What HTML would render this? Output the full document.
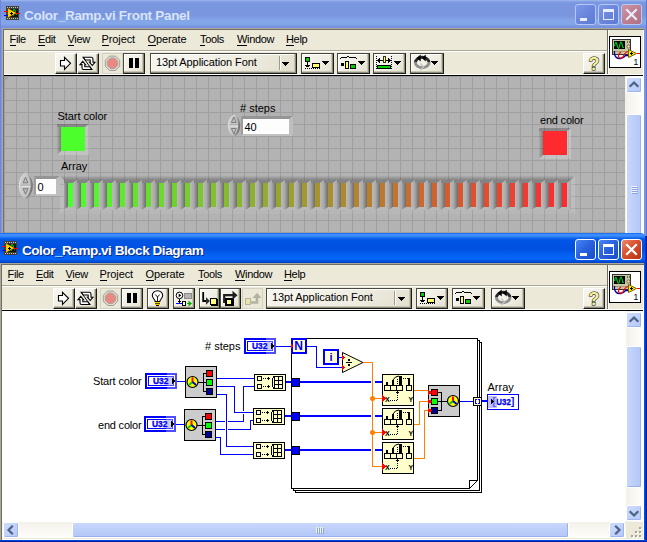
<!DOCTYPE html>
<html><head><meta charset="utf-8"><title>Color_Ramp.vi</title>
<style>
html,body{margin:0;padding:0;}
body{width:647px;height:542px;overflow:hidden;position:relative;background:#fff;font-family:"Liberation Sans","DejaVu Sans",sans-serif;font-size:11px;color:#000;line-height:1;}
.a{position:absolute;}
svg{position:absolute;left:0;top:0;overflow:visible;}
.ttext{position:absolute;font-weight:bold;font-size:13px;white-space:nowrap;line-height:16px;}
.mi{position:absolute;font-size:11px;line-height:13px;white-space:nowrap;letter-spacing:-0.35px;}
.mi u{text-decoration:none;border-bottom:1px solid #000;}
.lbl{position:absolute;font-size:11px;line-height:13px;white-space:nowrap;}
.btn{position:absolute;box-sizing:border-box;width:22px;height:21px;background:linear-gradient(135deg,#f8f7f0 0,#f0eee3 55%,#e2dfce 100%);border:1px solid;border-color:#fff #1c1c1c #1c1c1c #fff;box-shadow:inset -1px -1px 0 #8a8878,inset -2px -2px 0 #c8c5b2;}
.b2{border-color:#4a493f #1c1c1c #1c1c1c #4a493f;box-shadow:inset -1px -1px 0 #8a8878,inset -2px -2px 0 #c8c5b2,inset 1px 1px 0 #fff;}
.flat{position:absolute;box-sizing:border-box;width:21px;height:21px;background:#ebe8d8;border:1px solid #d4d1c0;}
.cap{position:absolute;box-sizing:border-box;width:21px;height:21px;border-radius:3px;border:1px solid #fff;}
.sbtn{position:absolute;box-sizing:border-box;width:16px;height:16px;border-radius:2px;border:1px solid #fff;background:linear-gradient(135deg,#cddcfc,#b5c9f8);box-shadow:inset -1px -1px 0 #9db4ee;}
</style></head><body>

<div class="a" style="left:0px;top:-2px;width:647px;height:238px;background:#7a96df;"></div>
<div class="a" style="left:0px;top:-2px;width:647px;height:30px;background:linear-gradient(#a2b8ec 0,#a2b8ec 2px,#7b9ae3 4px,#7a96df 6px,#7a96df 18px,#82a6e8 22px,#82a6e8 26px,#7790e0 29px,#7790e0 30px);"></div>
<div class="a" style="left:2px;top:28px;width:642px;height:206px;background:#aca899;"></div>
<div class="a" style="left:3px;top:29px;width:641px;height:205px;background:#716f64;"></div>
<div class="a" style="left:4px;top:30px;width:640px;height:204px;background:#fff;"></div>
<div class="a" style="left:4px;top:30px;width:639px;height:203px;background:#ece9d8;"></div>
<div class="ttext" style="left:24px;top:7.5px;font-size:13.5px;color:#d8e4f8;letter-spacing:-0.3px;">Color_Ramp.vi Front Panel</div>
<span class="mi" style="left:9.5px;top:33px;"><u>F</u>ile</span>
<span class="mi" style="left:38px;top:33px;"><u>E</u>dit</span>
<span class="mi" style="left:67.5px;top:33px;"><u>V</u>iew</span>
<span class="mi" style="left:101.5px;top:33px;letter-spacing:-0.1px;"><u>P</u>roject</span>
<span class="mi" style="left:147.5px;top:33px;letter-spacing:-0.1px;"><u>O</u>perate</span>
<span class="mi" style="left:200px;top:33px;"><u>T</u>ools</span>
<span class="mi" style="left:237px;top:33px;"><u>W</u>indow</span>
<span class="mi" style="left:286px;top:33px;"><u>H</u>elp</span>
<div class="a" style="left:4px;top:50px;width:603px;height:1px;background:#aca899;"></div>
<div class="a" style="left:4px;top:51px;width:603px;height:1px;background:#fff;"></div>
<div class="a" style="left:607px;top:30px;width:1px;height:45px;background:#716f64;"></div>
<div class="a" style="left:608px;top:30px;width:1px;height:45px;background:#fff;"></div>
<div class="a" style="left:4px;top:74px;width:639px;height:1px;background:#fff;"></div>
<div class="a" style="left:4px;top:75px;width:639px;height:1px;background:#000;"></div>
<div class="a" style="left:609px;top:36px;width:32px;height:32px;background:#fff;box-sizing:border-box;border:1px solid #000;"></div>
<div class="a" style="left:646px;top:0px;width:1px;height:236px;background:#6373d0;"></div>
<div class="a" style="left:0px;top:0px;width:1px;height:236px;background:#6f86dc;"></div>
<div class="a" style="left:4px;top:76px;width:621px;height:160px;background:#b3b3b3;background-image:linear-gradient(90deg,transparent 0,transparent 11px,#9f9f9f 11px,#9f9f9f 12px),linear-gradient(180deg,transparent 0,transparent 11px,#9f9f9f 11px,#9f9f9f 12px);background-size:12px 12px,12px 12px;background-position:1px 1px;"></div>
<div class="a" style="left:625px;top:76px;width:18px;height:160px;background:linear-gradient(90deg,#f3f1ea,#fefefb);"></div>
<div class="a" style="left:0px;top:233px;width:647px;height:309px;background:#0054e3;border-radius:0 8px 0 0;"></div>
<div class="a" style="left:0px;top:233px;width:647px;height:30px;background:linear-gradient(#0058ee 0,#3c8cfb 1px,#3c8cfb 3px,#1168ee 5px,#0055e5 7px,#0050e0 16px,#0560f0 22px,#0666f7 26px,#0048d0 29px,#0040c0 30px);border-radius:0 7px 0 0;"></div>
<div class="a" style="left:0px;top:263px;width:644px;height:277px;background:#aca899;"></div>
<div class="a" style="left:1px;top:264px;width:643px;height:276px;background:#716f64;"></div>
<div class="a" style="left:2px;top:265px;width:642px;height:275px;background:#fff;"></div>
<div class="a" style="left:2px;top:265px;width:641px;height:274px;background:#ece9d8;"></div>
<div class="ttext" style="left:22px;top:242.5px;font-size:13.5px;color:#fff;text-shadow:1px 1px 0 #0a2a8c;letter-spacing:-0.45px;">Color_Ramp.vi Block Diagram</div>
<span class="mi" style="left:7.5px;top:268px;"><u>F</u>ile</span>
<span class="mi" style="left:36px;top:268px;"><u>E</u>dit</span>
<span class="mi" style="left:65.5px;top:268px;"><u>V</u>iew</span>
<span class="mi" style="left:99.5px;top:268px;letter-spacing:-0.1px;"><u>P</u>roject</span>
<span class="mi" style="left:145.5px;top:268px;letter-spacing:-0.1px;"><u>O</u>perate</span>
<span class="mi" style="left:198px;top:268px;"><u>T</u>ools</span>
<span class="mi" style="left:235px;top:268px;"><u>W</u>indow</span>
<span class="mi" style="left:284px;top:268px;"><u>H</u>elp</span>
<div class="a" style="left:2px;top:285px;width:605px;height:1px;background:#aca899;"></div>
<div class="a" style="left:2px;top:286px;width:605px;height:1px;background:#fff;"></div>
<div class="a" style="left:607px;top:265px;width:1px;height:45px;background:#716f64;"></div>
<div class="a" style="left:608px;top:265px;width:1px;height:45px;background:#fff;"></div>
<div class="a" style="left:2px;top:309px;width:641px;height:1px;background:#fff;"></div>
<div class="a" style="left:2px;top:310px;width:641px;height:1px;background:#000;"></div>
<div class="a" style="left:609px;top:271px;width:32px;height:32px;background:#fff;box-sizing:border-box;border:1px solid #000;"></div>
<div class="a" style="left:645px;top:236px;width:1px;height:306px;background:#0038d0;"></div>
<div class="a" style="left:646px;top:236px;width:1px;height:306px;background:#001ea0;"></div>
<div class="a" style="left:0px;top:540px;width:647px;height:1px;background:#0046e0;"></div>
<div class="a" style="left:0px;top:541px;width:647px;height:1px;background:#001ea0;"></div>
<div class="a" style="left:2px;top:311px;width:624px;height:211px;background:#fff;"></div>
<div class="a" style="left:626px;top:311px;width:17px;height:211px;background:linear-gradient(90deg,#f3f1ea,#fefefb);"></div>
<div class="a" style="left:2px;top:522px;width:624px;height:16px;background:linear-gradient(180deg,#f3f1ea,#fefefb);"></div>
<div class="a" style="left:626px;top:522px;width:17px;height:16px;background:#ece9d8;"></div>
<div class="btn" style="left:55px;top:53px;width:22px;height:21px;"></div>
<div class="btn" style="left:77px;top:53px;width:22px;height:21px;"></div>
<div class="flat" style="left:102px;top:53px;width:21px;height:21px;"></div>
<div class="btn b2" style="left:123px;top:53px;width:22px;height:21px;"></div>
<div class="btn b2" style="left:150px;top:53px;width:147px;height:21px;"></div>
<div class="lbl" style="left:156px;top:56px;letter-spacing:-0.1px;">13pt Application Font</div>
<div class="a" style="left:279px;top:56px;width:1px;height:14px;background:#9d9a8b;"></div>
<div class="a" style="left:280px;top:56px;width:1px;height:14px;background:#fff;"></div>
<div class="btn b2" style="left:301px;top:53px;width:33px;height:21px;"></div>
<div class="btn b2" style="left:337px;top:53px;width:33px;height:21px;"></div>
<div class="btn b2" style="left:373px;top:53px;width:33px;height:21px;"></div>
<div class="btn b2" style="left:410px;top:53px;width:34px;height:21px;"></div>
<div class="btn" style="left:583px;top:53px;width:22px;height:21px;"></div>
<svg width="647" height="542" viewBox="0 0 647 542" shape-rendering="crispEdges"><path d="M60.5,60.5 h4 v-3.2 l6,6 l-6,6 v-3.3 h-4 z" fill="#fff" stroke="#000" stroke-width="1.1" shape-rendering="geometricPrecision"/><g transform="translate(87.5,63.4)"><path d="M-4.3,-6.1 L4,-6.1 Q5.5,-6.1 5.5,-4 L5.5,-1.2 L7.5,-1.2 L4.75,2.1 L2,-1.2 L2.7,-1.2 L2.7,-3.4 L-2.4,-3.4 Z" fill="#fff" stroke="#000" stroke-width="1.1" shape-rendering="geometricPrecision" stroke-linejoin="miter"/><path d="M4.3,6.1 L-4,6.1 Q-5.5,6.1 -5.5,4 L-5.5,1.2 L-7.5,1.2 L-4.75,-2.1 L-2,1.2 L-2.7,1.2 L-2.7,3.4 L2.4,3.4 Z" fill="#fff" stroke="#000" stroke-width="1.1" shape-rendering="geometricPrecision" stroke-linejoin="miter"/><path d="M-4.3,-6.1 L4.3,6.1" fill="none" stroke="#000" stroke-width="1.0" shape-rendering="geometricPrecision" stroke-linejoin="miter"/></g><path d="M109.5192,56.099999999999994 h5.9616 l4.219200000000001,4.219200000000001 v5.9616 l-4.219200000000001,4.219200000000001 h-5.9616 l-4.219200000000001,-4.219200000000001 v-5.9616 z" fill="#dddbd0" stroke="#a0a098" stroke-width="1" shape-rendering="geometricPrecision"/><path d="M110.3472,58.099999999999994 h4.3056 l3.0472,3.0472 v4.3056 l-3.0472,3.0472 h-4.3056 l-3.0472,-3.0472 v-4.3056 z" fill="#e98a82" stroke="#a8a49c" stroke-width="0.9" shape-rendering="geometricPrecision"/><rect x="129" y="58" width="4" height="10" fill="#000"/><rect x="135" y="58" width="4" height="10" fill="#000"/><rect x="282" y="62" width="7" height="1" fill="#000"/><rect x="283" y="63" width="5" height="1" fill="#000"/><rect x="284" y="64" width="3" height="1" fill="#000"/><rect x="285" y="65" width="1" height="1" fill="#000"/><rect x="305.5" y="57.5" width="4" height="4" fill="#00d000" stroke="#000" stroke-width="1"/><rect x="307" y="62" width="1" height="5" fill="#000"/><rect x="305" y="65" width="5" height="1" fill="#000"/><rect x="306" y="66" width="3" height="1" fill="#000"/><rect x="305" y="68" width="1" height="1" fill="#000"/><rect x="307" y="68" width="1" height="1" fill="#000"/><rect x="309" y="68" width="1" height="1" fill="#000"/><rect x="311" y="68" width="1" height="1" fill="#000"/><rect x="313" y="68" width="1" height="1" fill="#000"/><rect x="315" y="68" width="1" height="1" fill="#000"/><rect x="317" y="68" width="1" height="1" fill="#000"/><rect x="319" y="68" width="1" height="1" fill="#000"/><rect x="312.5" y="63.5" width="7" height="4" fill="#ffff66" stroke="#000" stroke-width="1"/><rect x="322" y="61" width="7" height="1" fill="#000"/><rect x="323" y="62" width="5" height="1" fill="#000"/><rect x="324" y="63" width="3" height="1" fill="#000"/><rect x="325" y="64" width="1" height="1" fill="#000"/><rect x="341" y="57" width="6" height="1" fill="#000"/><rect x="349" y="57" width="7" height="1" fill="#000"/><rect x="340" y="58" width="1" height="1" fill="#000"/><rect x="356" y="58" width="1" height="1" fill="#000"/><rect x="347" y="56" width="2" height="1" fill="#000"/><rect x="341" y="63" width="3" height="3" fill="#000"/><rect x="345.5" y="61.5" width="3" height="7" fill="#ffff66" stroke="#000" stroke-width="1"/><rect x="350.5" y="64.5" width="5" height="4" fill="#00d000" stroke="#000" stroke-width="1"/><rect x="358" y="61" width="7" height="1" fill="#000"/><rect x="359" y="62" width="5" height="1" fill="#000"/><rect x="360" y="63" width="3" height="1" fill="#000"/><rect x="361" y="64" width="1" height="1" fill="#000"/><rect x="376" y="56" width="1" height="1" fill="#000"/><rect x="391" y="56" width="1" height="1" fill="#000"/><rect x="376" y="58" width="1" height="1" fill="#000"/><rect x="391" y="58" width="1" height="1" fill="#000"/><rect x="376" y="60" width="1" height="1" fill="#000"/><rect x="391" y="60" width="1" height="1" fill="#000"/><rect x="376" y="62" width="1" height="1" fill="#000"/><rect x="391" y="62" width="1" height="1" fill="#000"/><rect x="376" y="64" width="1" height="1" fill="#000"/><rect x="391" y="64" width="1" height="1" fill="#000"/><rect x="376" y="66" width="1" height="1" fill="#000"/><rect x="391" y="66" width="1" height="1" fill="#000"/><rect x="376" y="68" width="1" height="1" fill="#000"/><rect x="391" y="68" width="1" height="1" fill="#000"/><rect x="377" y="60" width="14" height="1" fill="#000"/><path d="M377,60.5 l3,-3 v6 z M391,60.5 l-3,-3 v6 z" fill="#000" /><rect x="383.4" y="56.4" width="2.2" height="6.2" fill="#ffff66" stroke="#000" stroke-width="0.8"/><rect x="377.5" y="65.5" width="13" height="3" fill="#00d000" stroke="#000" stroke-width="1"/><rect x="394" y="61" width="7" height="1" fill="#000"/><rect x="395" y="62" width="5" height="1" fill="#000"/><rect x="396" y="63" width="3" height="1" fill="#000"/><rect x="397" y="64" width="1" height="1" fill="#000"/><path d="M415.4,62.5 a6.8,5.2 0 0 1 13.6,0" fill="none" stroke="#2a2a2a" stroke-width="3" shape-rendering="geometricPrecision"/><path d="M429.0,62.5 a6.8,5.2 0 0 1 -13.6,0" fill="none" stroke="#8f8f8f" stroke-width="3" shape-rendering="geometricPrecision"/><path d="M420.7,54.5 l-4,3.5 l4,3.5 z M425.7,54.5 l-4,3.5 l4,3.5 z" fill="#000" shape-rendering="geometricPrecision"/><path d="M420.2,63.5 l3.5,3.2 l-3.5,3.5" fill="none" stroke="#c8c6bc" stroke-width="1.2" shape-rendering="geometricPrecision"/><rect x="431" y="61" width="7" height="1" fill="#000"/><rect x="432" y="62" width="5" height="1" fill="#000"/><rect x="433" y="63" width="3" height="1" fill="#000"/><rect x="434" y="64" width="1" height="1" fill="#000"/><text x="594" y="70" font-size="18" fill="#f7f29a" font-weight="bold" text-anchor="middle" stroke="#000" stroke-width="1" paint-order="stroke" shape-rendering="geometricPrecision">?</text></svg>
<div class="cap" style="left:575px;top:4px;background:linear-gradient(135deg,#7d98e8 0,#6a86dd 50%,#5d7ad6 100%);border-color:#b9c8f3;"></div>
<div class="cap" style="left:598px;top:4px;background:linear-gradient(135deg,#7d98e8 0,#6a86dd 50%,#5d7ad6 100%);border-color:#b9c8f3;"></div>
<div class="cap" style="left:621px;top:4px;background:linear-gradient(135deg,#cc94a4 0,#bd7f92 50%,#b0707f 100%);border-color:#b9c8f3;"></div>
<svg width="647" height="542" viewBox="0 0 647 542" shape-rendering="crispEdges"><rect x="580" y="18" width="7" height="3" fill="#e8eefc"/><rect x="603.5" y="9.5" width="10" height="10" fill="none" stroke="#e8eefc" stroke-width="1"/><rect x="603" y="9" width="11" height="3" fill="#e8eefc"/><path d="M627,10 l9,9 M636,10 l-9,9" fill="none" stroke="#e8eefc" stroke-width="2.2" shape-rendering="geometricPrecision" stroke-linecap="square"/></svg>
<svg width="647" height="542" viewBox="0 0 647 542" shape-rendering="crispEdges"><rect x="6" y="6" width="13" height="14" fill="#404038"/><rect x="7" y="7" width="1" height="1" fill="#c8c8c8"/><rect x="7" y="18" width="1" height="1" fill="#c8c8c8"/><rect x="9" y="7" width="1" height="1" fill="#c8c8c8"/><rect x="9" y="18" width="1" height="1" fill="#c8c8c8"/><rect x="11" y="7" width="1" height="1" fill="#c8c8c8"/><rect x="11" y="18" width="1" height="1" fill="#c8c8c8"/><rect x="13" y="7" width="1" height="1" fill="#c8c8c8"/><rect x="13" y="18" width="1" height="1" fill="#c8c8c8"/><rect x="15" y="7" width="1" height="1" fill="#c8c8c8"/><rect x="15" y="18" width="1" height="1" fill="#c8c8c8"/><rect x="17" y="7" width="1" height="1" fill="#c8c8c8"/><rect x="17" y="18" width="1" height="1" fill="#c8c8c8"/><rect x="7" y="9" width="11" height="8" fill="#101810"/><rect x="13" y="9" width="2" height="2" fill="#00a000"/><rect x="15" y="10" width="1" height="2" fill="#00a000"/><rect x="13" y="15" width="1" height="1" fill="#00a000"/><rect x="16" y="14" width="1" height="1" fill="#00a000"/><path d="M8,8.8 l8,4.2 l-8,4.2 z" fill="#ffd800" stroke="#ffb000" stroke-width="0.6" shape-rendering="geometricPrecision"/><rect x="10" y="13" width="3" height="1" fill="#000"/><rect x="11" y="12" width="1" height="3" fill="#000"/><rect x="4" y="11" width="4" height="1" fill="#ff0000"/><rect x="16" y="13" width="4" height="1" fill="#ff0000"/><rect x="4" y="15" width="4" height="1" fill="#0000ff"/></svg>
<svg width="647" height="542" viewBox="0 0 647 542" shape-rendering="crispEdges"><rect x="612.5" y="39.5" width="18" height="15" fill="#c8c8a0" stroke="#303030" stroke-width="1"/><rect x="614" y="41" width="11" height="8" fill="#000"/><path d="M614.5,46 q1.3,-7 2.6,-0.5 q1.3,6 2.6,0 q1.3,-7 2.6,0 q0.6,3 1.3,1.5" fill="none" stroke="#00d020" stroke-width="1.2" shape-rendering="geometricPrecision"/><rect x="627" y="41" width="1" height="2" fill="#707060"/><rect x="629" y="41" width="1" height="2" fill="#707060"/><circle cx="628.5" cy="46.5" r="1.6" fill="#ffd8a0" stroke="#505040" stroke-width="0.7" shape-rendering="geometricPrecision"/><rect x="613" y="51" width="17" height="1" fill="#a0a080"/><path d="M614.5,51 v3 q1,5 6,4.5 q3,-0.3 5,-3 h3" fill="none" stroke="#0000a0" stroke-width="1.3" shape-rendering="geometricPrecision"/><path d="M621,52 q-4,3 -2,5.5 q3,2 5,-2.5 q1.5,-3.5 5,-3.5 h2" fill="none" stroke="#ff0000" stroke-width="1.2" shape-rendering="geometricPrecision"/><path d="M628.5,49.5 l8,4 l-8,4 z" fill="#ffee00" stroke="#706000" stroke-width="1" shape-rendering="geometricPrecision"/><rect x="630" y="53" width="3" height="1" fill="#000"/><rect x="631" y="52" width="1" height="3" fill="#000"/><rect x="637" y="53" width="3" height="1" fill="#ff0000"/><text x="633.5" y="64.6" font-size="8.5" fill="#000" font-weight="normal" shape-rendering="geometricPrecision">1</text></svg>
<div class="btn" style="left:53px;top:288px;width:22px;height:21px;"></div>
<div class="btn" style="left:75px;top:288px;width:22px;height:21px;"></div>
<div class="flat" style="left:100px;top:288px;width:21px;height:21px;"></div>
<div class="btn b2" style="left:121px;top:288px;width:22px;height:21px;"></div>
<div class="btn b2" style="left:147px;top:288px;width:22px;height:21px;"></div>
<div class="btn b2" style="left:173px;top:288px;width:22px;height:21px;"></div>
<div class="btn b2" style="left:199px;top:288px;width:21px;height:21px;"></div>
<div class="btn b2" style="left:220px;top:288px;width:21px;height:21px;"></div>
<div class="flat" style="left:242px;top:288px;width:21px;height:21px;"></div>
<div class="btn b2" style="left:266px;top:288px;width:146px;height:21px;"></div>
<div class="lbl" style="left:272px;top:291px;letter-spacing:-0.1px;">13pt Application Font</div>
<div class="a" style="left:394px;top:291px;width:1px;height:14px;background:#9d9a8b;"></div>
<div class="a" style="left:395px;top:291px;width:1px;height:14px;background:#fff;"></div>
<div class="btn b2" style="left:416px;top:288px;width:32px;height:21px;"></div>
<div class="btn b2" style="left:452px;top:288px;width:33px;height:21px;"></div>
<div class="btn b2" style="left:491px;top:288px;width:34px;height:21px;"></div>
<div class="btn" style="left:583px;top:288px;width:22px;height:21px;"></div>
<svg width="647" height="542" viewBox="0 0 647 542" shape-rendering="crispEdges"><path d="M58.5,295.5 h4 v-3.2 l6,6 l-6,6 v-3.3 h-4 z" fill="#fff" stroke="#000" stroke-width="1.1" shape-rendering="geometricPrecision"/><g transform="translate(85.5,298.4)"><path d="M-4.3,-6.1 L4,-6.1 Q5.5,-6.1 5.5,-4 L5.5,-1.2 L7.5,-1.2 L4.75,2.1 L2,-1.2 L2.7,-1.2 L2.7,-3.4 L-2.4,-3.4 Z" fill="#fff" stroke="#000" stroke-width="1.1" shape-rendering="geometricPrecision" stroke-linejoin="miter"/><path d="M4.3,6.1 L-4,6.1 Q-5.5,6.1 -5.5,4 L-5.5,1.2 L-7.5,1.2 L-4.75,-2.1 L-2,1.2 L-2.7,1.2 L-2.7,3.4 L2.4,3.4 Z" fill="#fff" stroke="#000" stroke-width="1.1" shape-rendering="geometricPrecision" stroke-linejoin="miter"/><path d="M-4.3,-6.1 L4.3,6.1" fill="none" stroke="#000" stroke-width="1.0" shape-rendering="geometricPrecision" stroke-linejoin="miter"/></g><path d="M107.5192,291.1 h5.9616 l4.219200000000001,4.219200000000001 v5.9616 l-4.219200000000001,4.219200000000001 h-5.9616 l-4.219200000000001,-4.219200000000001 v-5.9616 z" fill="#dddbd0" stroke="#a0a098" stroke-width="1" shape-rendering="geometricPrecision"/><path d="M108.3472,293.1 h4.3056 l3.0472,3.0472 v4.3056 l-3.0472,3.0472 h-4.3056 l-3.0472,-3.0472 v-4.3056 z" fill="#e98a82" stroke="#a8a49c" stroke-width="0.9" shape-rendering="geometricPrecision"/><rect x="127" y="293" width="4" height="10" fill="#000"/><rect x="133" y="293" width="4" height="10" fill="#000"/><path d="M155.2,301.5 c0,-2.2 -2.9,-3 -2.9,-6 a5.2,4.8 0 0 1 10.4,0 c0,3 -2.9,3.8 -2.9,6 z" fill="#fff" stroke="#000" stroke-width="1.1" shape-rendering="geometricPrecision"/><path d="M155.3,294.5 l2.2,2.5 l2.2,-2.5 M157.5,297 v4" fill="none" stroke="#000" stroke-width="0.9" shape-rendering="geometricPrecision"/><rect x="155.0" y="302" width="5" height="1" fill="#ffd000"/><rect x="155.0" y="303" width="5" height="1" fill="#604800"/><rect x="155.0" y="304" width="5" height="1" fill="#ffd000"/><rect x="156.0" y="305" width="3" height="1" fill="#000"/><path d="M179.5,295.4 m-3.3,0 a3.3,3.3 0 1 0 6.6,0 a3.3,3.3 0 1 0 -6.6,0" fill="#fff" stroke="#000" stroke-width="1" shape-rendering="geometricPrecision"/><path d="M178.7,293.6 l2.6,1.8 l-2.6,1.8 z" fill="#000" shape-rendering="geometricPrecision"/><rect x="179" y="299" width="1" height="4" fill="#000"/><rect x="178" y="301" width="3" height="1" fill="#000"/><rect x="184.5" y="293.5" width="7" height="5" fill="#b4b4b4" stroke="#8c8c8c" stroke-width="1"/><rect x="176" y="303" width="6" height="1" fill="#0000ff"/><rect x="182.5" y="301.5" width="3" height="4" fill="#fff" stroke="#000" stroke-width="1"/><rect x="187" y="303" width="2" height="1" fill="#00b000"/><path d="M188.5,300.5 l3.5,3 l-3.5,3 z" fill="#00b000" shape-rendering="geometricPrecision"/><path d="M203.2,292 v9 h4" fill="none" stroke="#000" stroke-width="1.8" shape-rendering="geometricPrecision"/><path d="M206,297.3 l4,3.7 l-4,3.7 z" fill="#303030" shape-rendering="geometricPrecision"/><rect x="211" y="299" width="7" height="7" fill="#000"/><rect x="210.5" y="298.5" width="6" height="6" fill="#ffff80" stroke="#000" stroke-width="1"/><rect x="225" y="298" width="9" height="8" fill="#000"/><rect x="226.5" y="299.5" width="5" height="5" fill="#ffff80" stroke="#000" stroke-width="1"/><path d="M224.2,303 v-7.8 h9" fill="none" stroke="#202020" stroke-width="2.2" shape-rendering="geometricPrecision"/><path d="M232.5,290.7 l5,4.5 l-5,4.5 z" fill="#202020" shape-rendering="geometricPrecision"/><rect x="245.5" y="298.5" width="5" height="6" fill="#e8e4b0" stroke="#b8b49a" stroke-width="1"/><path d="M251,302.5 h6 v-5" fill="none" stroke="#b4b2a2" stroke-width="2.6" shape-rendering="geometricPrecision"/><path d="M252.5,298 l4.5,-5.2 l4.5,5.2 z" fill="#b4b2a2" shape-rendering="geometricPrecision"/><rect x="398" y="297" width="7" height="1" fill="#000"/><rect x="399" y="298" width="5" height="1" fill="#000"/><rect x="400" y="299" width="3" height="1" fill="#000"/><rect x="401" y="300" width="1" height="1" fill="#000"/><rect x="420.5" y="292.5" width="4" height="4" fill="#00d000" stroke="#000" stroke-width="1"/><rect x="422" y="297" width="1" height="5" fill="#000"/><rect x="420" y="300" width="5" height="1" fill="#000"/><rect x="421" y="301" width="3" height="1" fill="#000"/><rect x="420" y="303" width="1" height="1" fill="#000"/><rect x="422" y="303" width="1" height="1" fill="#000"/><rect x="424" y="303" width="1" height="1" fill="#000"/><rect x="426" y="303" width="1" height="1" fill="#000"/><rect x="428" y="303" width="1" height="1" fill="#000"/><rect x="430" y="303" width="1" height="1" fill="#000"/><rect x="432" y="303" width="1" height="1" fill="#000"/><rect x="434" y="303" width="1" height="1" fill="#000"/><rect x="427.5" y="298.5" width="7" height="4" fill="#ffff66" stroke="#000" stroke-width="1"/><rect x="437" y="296" width="7" height="1" fill="#000"/><rect x="438" y="297" width="5" height="1" fill="#000"/><rect x="439" y="298" width="3" height="1" fill="#000"/><rect x="440" y="299" width="1" height="1" fill="#000"/><rect x="456" y="292" width="6" height="1" fill="#000"/><rect x="464" y="292" width="7" height="1" fill="#000"/><rect x="455" y="293" width="1" height="1" fill="#000"/><rect x="471" y="293" width="1" height="1" fill="#000"/><rect x="462" y="291" width="2" height="1" fill="#000"/><rect x="456" y="298" width="3" height="3" fill="#000"/><rect x="460.5" y="296.5" width="3" height="7" fill="#ffff66" stroke="#000" stroke-width="1"/><rect x="465.5" y="299.5" width="5" height="4" fill="#00d000" stroke="#000" stroke-width="1"/><rect x="473" y="296" width="7" height="1" fill="#000"/><rect x="474" y="297" width="5" height="1" fill="#000"/><rect x="475" y="298" width="3" height="1" fill="#000"/><rect x="476" y="299" width="1" height="1" fill="#000"/><path d="M496.4,297.5 a6.8,5.2 0 0 1 13.6,0" fill="none" stroke="#2a2a2a" stroke-width="3" shape-rendering="geometricPrecision"/><path d="M510.0,297.5 a6.8,5.2 0 0 1 -13.6,0" fill="none" stroke="#8f8f8f" stroke-width="3" shape-rendering="geometricPrecision"/><path d="M501.7,289.5 l-4,3.5 l4,3.5 z M506.7,289.5 l-4,3.5 l4,3.5 z" fill="#000" shape-rendering="geometricPrecision"/><path d="M501.2,298.5 l3.5,3.2 l-3.5,3.5" fill="none" stroke="#c8c6bc" stroke-width="1.2" shape-rendering="geometricPrecision"/><rect x="512" y="296" width="7" height="1" fill="#000"/><rect x="513" y="297" width="5" height="1" fill="#000"/><rect x="514" y="298" width="3" height="1" fill="#000"/><rect x="515" y="299" width="1" height="1" fill="#000"/><text x="594" y="305" font-size="18" fill="#f7f29a" font-weight="bold" text-anchor="middle" stroke="#000" stroke-width="1" paint-order="stroke" shape-rendering="geometricPrecision">?</text></svg>
<div class="cap" style="left:575px;top:239px;background:linear-gradient(135deg,#4a86f4 0,#2a62e0 45%,#1a4cc8 100%);border-color:#fff;"></div>
<div class="cap" style="left:598px;top:239px;background:linear-gradient(135deg,#4a86f4 0,#2a62e0 45%,#1a4cc8 100%);border-color:#fff;"></div>
<div class="cap" style="left:621px;top:239px;background:linear-gradient(135deg,#ec8a6e 0,#d8502e 45%,#b8300e 100%);border-color:#fff;"></div>
<svg width="647" height="542" viewBox="0 0 647 542" shape-rendering="crispEdges"><rect x="580" y="253" width="7" height="3" fill="#fff"/><rect x="603.5" y="244.5" width="10" height="10" fill="none" stroke="#fff" stroke-width="1"/><rect x="603" y="244" width="11" height="3" fill="#fff"/><path d="M627,245 l9,9 M636,245 l-9,9" fill="none" stroke="#fff" stroke-width="2.2" shape-rendering="geometricPrecision" stroke-linecap="square"/></svg>
<svg width="647" height="542" viewBox="0 0 647 542" shape-rendering="crispEdges"><rect x="4" y="241" width="13" height="14" fill="#404038"/><rect x="5" y="242" width="1" height="1" fill="#c8c8c8"/><rect x="5" y="253" width="1" height="1" fill="#c8c8c8"/><rect x="7" y="242" width="1" height="1" fill="#c8c8c8"/><rect x="7" y="253" width="1" height="1" fill="#c8c8c8"/><rect x="9" y="242" width="1" height="1" fill="#c8c8c8"/><rect x="9" y="253" width="1" height="1" fill="#c8c8c8"/><rect x="11" y="242" width="1" height="1" fill="#c8c8c8"/><rect x="11" y="253" width="1" height="1" fill="#c8c8c8"/><rect x="13" y="242" width="1" height="1" fill="#c8c8c8"/><rect x="13" y="253" width="1" height="1" fill="#c8c8c8"/><rect x="15" y="242" width="1" height="1" fill="#c8c8c8"/><rect x="15" y="253" width="1" height="1" fill="#c8c8c8"/><rect x="5" y="244" width="11" height="8" fill="#101810"/><rect x="11" y="244" width="2" height="2" fill="#00a000"/><rect x="13" y="245" width="1" height="2" fill="#00a000"/><rect x="11" y="250" width="1" height="1" fill="#00a000"/><rect x="14" y="249" width="1" height="1" fill="#00a000"/><path d="M6,243.8 l8,4.2 l-8,4.2 z" fill="#ffd800" stroke="#ffb000" stroke-width="0.6" shape-rendering="geometricPrecision"/><rect x="8" y="248" width="3" height="1" fill="#000"/><rect x="9" y="247" width="1" height="3" fill="#000"/><rect x="2" y="246" width="4" height="1" fill="#ff0000"/><rect x="14" y="248" width="4" height="1" fill="#ff0000"/><rect x="2" y="250" width="4" height="1" fill="#0000ff"/></svg>
<svg width="647" height="542" viewBox="0 0 647 542" shape-rendering="crispEdges"><rect x="612.5" y="274.5" width="18" height="15" fill="#c8c8a0" stroke="#303030" stroke-width="1"/><rect x="614" y="276" width="11" height="8" fill="#000"/><path d="M614.5,281 q1.3,-7 2.6,-0.5 q1.3,6 2.6,0 q1.3,-7 2.6,0 q0.6,3 1.3,1.5" fill="none" stroke="#00d020" stroke-width="1.2" shape-rendering="geometricPrecision"/><rect x="627" y="276" width="1" height="2" fill="#707060"/><rect x="629" y="276" width="1" height="2" fill="#707060"/><circle cx="628.5" cy="281.5" r="1.6" fill="#ffd8a0" stroke="#505040" stroke-width="0.7" shape-rendering="geometricPrecision"/><rect x="613" y="286" width="17" height="1" fill="#a0a080"/><path d="M614.5,286 v3 q1,5 6,4.5 q3,-0.3 5,-3 h3" fill="none" stroke="#0000a0" stroke-width="1.3" shape-rendering="geometricPrecision"/><path d="M621,287 q-4,3 -2,5.5 q3,2 5,-2.5 q1.5,-3.5 5,-3.5 h2" fill="none" stroke="#ff0000" stroke-width="1.2" shape-rendering="geometricPrecision"/><path d="M628.5,284.5 l8,4 l-8,4 z" fill="#ffee00" stroke="#706000" stroke-width="1" shape-rendering="geometricPrecision"/><rect x="630" y="288" width="3" height="1" fill="#000"/><rect x="631" y="287" width="1" height="3" fill="#000"/><rect x="637" y="288" width="3" height="1" fill="#ff0000"/><text x="633.5" y="299.6" font-size="8.5" fill="#000" font-weight="normal" shape-rendering="geometricPrecision">1</text></svg>
<div class="a" style="left:0;top:0;width:647px;height:233px;overflow:hidden;">
<div class="sbtn" style="left:626px;top:77px;"></div>
<div class="a" style="left:626px;top:114px;width:16px;height:130px;box-sizing:border-box;border:1px solid #fff;border-radius:2px;background:linear-gradient(90deg,#c9d7fb,#bacdf9 60%,#b3c6f6);box-shadow:inset -1px -1px 0 #98b1e8;"></div>
</div>
<div class="sbtn" style="left:626px;top:312px;"></div>
<div class="a" style="left:626px;top:346px;width:16px;height:142px;box-sizing:border-box;border:1px solid #fff;border-radius:2px;background:linear-gradient(90deg,#c9d7fb,#bacdf9 60%,#b3c6f6);box-shadow:inset -1px -1px 0 #98b1e8;"></div>
<div class="sbtn" style="left:626px;top:505px;"></div>
<div class="sbtn" style="left:3px;top:522px;"></div>
<div class="a" style="left:72px;top:522px;width:497px;height:16px;box-sizing:border-box;border:1px solid #fff;border-radius:2px;background:linear-gradient(180deg,#c9d7fb,#bacdf9 60%,#b3c6f6);box-shadow:inset -1px -1px 0 #98b1e8;"></div>
<div class="sbtn" style="left:609px;top:522px;"></div>
<svg width="647" height="542" viewBox="0 0 647 542" shape-rendering="crispEdges"><path d="M629.7,86.8 l4.3,-4.3 l4.3,4.3" fill="none" stroke="#4d6185" stroke-width="2.2" shape-rendering="geometricPrecision"/><path d="M629.7,321.8 l4.3,-4.3 l4.3,4.3" fill="none" stroke="#4d6185" stroke-width="2.2" shape-rendering="geometricPrecision"/><path d="M629.7,511.2 l4.3,4.3 l4.3,-4.3" fill="none" stroke="#4d6185" stroke-width="2.2" shape-rendering="geometricPrecision"/><path d="M12.8,525.7 l-4.3,4.3 l4.3,4.3" fill="none" stroke="#4d6185" stroke-width="2.2" shape-rendering="geometricPrecision"/><path d="M615.2,525.7 l4.3,4.3 l-4.3,4.3" fill="none" stroke="#4d6185" stroke-width="2.2" shape-rendering="geometricPrecision"/><rect x="631" y="186" width="6" height="1" fill="#eef4fe"/><rect x="632" y="187" width="6" height="1" fill="#8ca3dc"/><rect x="316" y="527" width="1" height="6" fill="#eef4fe"/><rect x="317" y="528" width="1" height="6" fill="#8ca3dc"/><rect x="631" y="188" width="6" height="1" fill="#eef4fe"/><rect x="632" y="189" width="6" height="1" fill="#8ca3dc"/><rect x="318" y="527" width="1" height="6" fill="#eef4fe"/><rect x="319" y="528" width="1" height="6" fill="#8ca3dc"/><rect x="631" y="190" width="6" height="1" fill="#eef4fe"/><rect x="632" y="191" width="6" height="1" fill="#8ca3dc"/><rect x="320" y="527" width="1" height="6" fill="#eef4fe"/><rect x="321" y="528" width="1" height="6" fill="#8ca3dc"/><rect x="631" y="192" width="6" height="1" fill="#eef4fe"/><rect x="632" y="193" width="6" height="1" fill="#8ca3dc"/><rect x="322" y="527" width="1" height="6" fill="#eef4fe"/><rect x="323" y="528" width="1" height="6" fill="#8ca3dc"/><rect x="640" y="528" width="2" height="2" fill="#fff"/><rect x="639" y="527" width="2" height="2" fill="#a8a592"/><rect x="636" y="532" width="2" height="2" fill="#fff"/><rect x="635" y="531" width="2" height="2" fill="#a8a592"/><rect x="640" y="532" width="2" height="2" fill="#fff"/><rect x="639" y="531" width="2" height="2" fill="#a8a592"/><rect x="632" y="536" width="2" height="2" fill="#fff"/><rect x="631" y="535" width="2" height="2" fill="#a8a592"/><rect x="636" y="536" width="2" height="2" fill="#fff"/><rect x="635" y="535" width="2" height="2" fill="#a8a592"/><rect x="640" y="536" width="2" height="2" fill="#fff"/><rect x="639" y="535" width="2" height="2" fill="#a8a592"/></svg>
<svg width="647" height="542" viewBox="0 0 647 542"><defs><linearGradient id="cbl" x1="0" y1="0" x2="1" y2="0"><stop offset="0" stop-color="#000" stop-opacity="0.04"/><stop offset="1" stop-color="#000" stop-opacity="0.3"/></linearGradient></defs><polygon points="4,76 10,76 4,82" fill="#a0a0a0"/><polygon points="57,124 89,124 85,127 57,127" fill="rgba(0,0,0,0.23)"/><polygon points="57,127 61,127 61,151 57,155" fill="url(#cbl)"/><polygon points="57,155 61,151 85,151 89,155" fill="rgba(255,255,255,0.2)"/><polygon points="89,124 89,155 85,151 85,127" fill="rgba(255,255,255,0.22)"/><rect x="61" y="127" width="24" height="24" fill="#4cff2c"/><polygon points="539,128 571,128 567,131 539,131" fill="rgba(0,0,0,0.23)"/><polygon points="539,131 543,131 543,155 539,159" fill="url(#cbl)"/><polygon points="539,159 543,155 567,155 571,159" fill="rgba(255,255,255,0.2)"/><polygon points="571,128 571,159 567,155 567,131" fill="rgba(255,255,255,0.22)"/><rect x="543" y="131" width="24" height="24" fill="#ff2a30"/><defs><linearGradient id="agt" x1="0" y1="0" x2="0" y2="1"><stop offset="0" stop-color="#000" stop-opacity="0.03"/><stop offset="1" stop-color="#000" stop-opacity="0.26"/></linearGradient><linearGradient id="agl" x1="0" y1="0" x2="1" y2="0"><stop offset="0" stop-color="#a4a4a4"/><stop offset="1" stop-color="#6c6c6c"/></linearGradient><linearGradient id="agr" x1="0" y1="0" x2="1" y2="0"><stop offset="0" stop-color="#bababa"/><stop offset="1" stop-color="#a8a8a8"/></linearGradient></defs><polygon points="60,176 575,176 571,180 64,180" fill="url(#agt)"/><polygon points="60,176 64,180 64,210 60,214" fill="rgba(255,255,255,0.14)"/><polygon points="60,214 64,210 571,210 575,214" fill="rgba(255,255,255,0.06)"/><polygon points="575,176 575,214 571,210 571,180" fill="rgba(255,255,255,0.14)"/><rect x="64" y="180" width="507" height="30" fill="#b3b3b3"/><polygon points="64,180 77,180 73,183 64,183" fill="#848484"/><polygon points="64,183 68,183 68,207 64,210" fill="url(#agl)"/><polygon points="64,210 68,207 73,207 77,210" fill="#b9b9b9"/><polygon points="77,180 77,210 73,207 73,183" fill="url(#agr)"/><rect x="68" y="183" width="5" height="24" fill="#4cff2c"/><polygon points="77,180 90,180 86,183 77,183" fill="#848484"/><polygon points="77,183 81,183 81,207 77,210" fill="url(#agl)"/><polygon points="77,210 81,207 86,207 90,210" fill="#b9b9b9"/><polygon points="90,180 90,210 86,207 86,183" fill="url(#agr)"/><rect x="81" y="183" width="5" height="24" fill="#51f92c"/><polygon points="90,180 103,180 99,183 90,183" fill="#848484"/><polygon points="90,183 94,183 94,207 90,210" fill="url(#agl)"/><polygon points="90,210 94,207 99,207 103,210" fill="#b9b9b9"/><polygon points="103,180 103,210 99,207 99,183" fill="url(#agr)"/><rect x="94" y="183" width="5" height="24" fill="#55f42c"/><polygon points="103,180 116,180 112,183 103,183" fill="#848484"/><polygon points="103,183 107,183 107,207 103,210" fill="url(#agl)"/><polygon points="103,210 107,207 112,207 116,210" fill="#b9b9b9"/><polygon points="116,180 116,210 112,207 112,183" fill="url(#agr)"/><rect x="107" y="183" width="5" height="24" fill="#5aee2c"/><polygon points="116,180 129,180 125,183 116,183" fill="#848484"/><polygon points="116,183 120,183 120,207 116,210" fill="url(#agl)"/><polygon points="116,210 120,207 125,207 129,210" fill="#b9b9b9"/><polygon points="129,180 129,210 125,207 125,183" fill="url(#agr)"/><rect x="120" y="183" width="5" height="24" fill="#5fe92c"/><polygon points="129,180 142,180 138,183 129,183" fill="#848484"/><polygon points="129,183 133,183 133,207 129,210" fill="url(#agl)"/><polygon points="129,210 133,207 138,207 142,210" fill="#b9b9b9"/><polygon points="142,180 142,210 138,207 138,183" fill="url(#agr)"/><rect x="133" y="183" width="5" height="24" fill="#64e32d"/><polygon points="142,180 155,180 151,183 142,183" fill="#848484"/><polygon points="142,183 146,183 146,207 142,210" fill="url(#agl)"/><polygon points="142,210 146,207 151,207 155,210" fill="#b9b9b9"/><polygon points="155,180 155,210 151,207 151,183" fill="url(#agr)"/><rect x="146" y="183" width="5" height="24" fill="#68dd2d"/><polygon points="155,180 168,180 164,183 155,183" fill="#848484"/><polygon points="155,183 159,183 159,207 155,210" fill="url(#agl)"/><polygon points="155,210 159,207 164,207 168,210" fill="#b9b9b9"/><polygon points="168,180 168,210 164,207 164,183" fill="url(#agr)"/><rect x="159" y="183" width="5" height="24" fill="#6dd82d"/><polygon points="168,180 181,180 177,183 168,183" fill="#848484"/><polygon points="168,183 172,183 172,207 168,210" fill="url(#agl)"/><polygon points="168,210 172,207 177,207 181,210" fill="#b9b9b9"/><polygon points="181,180 181,210 177,207 177,183" fill="url(#agr)"/><rect x="172" y="183" width="5" height="24" fill="#72d22d"/><polygon points="181,180 194,180 190,183 181,183" fill="#848484"/><polygon points="181,183 185,183 185,207 181,210" fill="url(#agl)"/><polygon points="181,210 185,207 190,207 194,210" fill="#b9b9b9"/><polygon points="194,180 194,210 190,207 190,183" fill="url(#agr)"/><rect x="185" y="183" width="5" height="24" fill="#76cd2d"/><polygon points="194,180 207,180 203,183 194,183" fill="#848484"/><polygon points="194,183 198,183 198,207 194,210" fill="url(#agl)"/><polygon points="194,210 198,207 203,207 207,210" fill="#b9b9b9"/><polygon points="207,180 207,210 203,207 203,183" fill="url(#agr)"/><rect x="198" y="183" width="5" height="24" fill="#7bc72d"/><polygon points="207,180 220,180 216,183 207,183" fill="#848484"/><polygon points="207,183 211,183 211,207 207,210" fill="url(#agl)"/><polygon points="207,210 211,207 216,207 220,210" fill="#b9b9b9"/><polygon points="220,180 220,210 216,207 216,183" fill="url(#agr)"/><rect x="211" y="183" width="5" height="24" fill="#80c12d"/><polygon points="220,180 233,180 229,183 220,183" fill="#848484"/><polygon points="220,183 224,183 224,207 220,210" fill="url(#agl)"/><polygon points="220,210 224,207 229,207 233,210" fill="#b9b9b9"/><polygon points="233,180 233,210 229,207 229,183" fill="url(#agr)"/><rect x="224" y="183" width="5" height="24" fill="#85bc2d"/><polygon points="233,180 246,180 242,183 233,183" fill="#848484"/><polygon points="233,183 237,183 237,207 233,210" fill="url(#agl)"/><polygon points="233,210 237,207 242,207 246,210" fill="#b9b9b9"/><polygon points="246,180 246,210 242,207 242,183" fill="url(#agr)"/><rect x="237" y="183" width="5" height="24" fill="#89b62d"/><polygon points="246,180 259,180 255,183 246,183" fill="#848484"/><polygon points="246,183 250,183 250,207 246,210" fill="url(#agl)"/><polygon points="246,210 250,207 255,207 259,210" fill="#b9b9b9"/><polygon points="259,180 259,210 255,207 255,183" fill="url(#agr)"/><rect x="250" y="183" width="5" height="24" fill="#8eb12d"/><polygon points="259,180 272,180 268,183 259,183" fill="#848484"/><polygon points="259,183 263,183 263,207 259,210" fill="url(#agl)"/><polygon points="259,210 263,207 268,207 272,210" fill="#b9b9b9"/><polygon points="272,180 272,210 268,207 268,183" fill="url(#agr)"/><rect x="263" y="183" width="5" height="24" fill="#93ab2e"/><polygon points="272,180 285,180 281,183 272,183" fill="#848484"/><polygon points="272,183 276,183 276,207 272,210" fill="url(#agl)"/><polygon points="272,210 276,207 281,207 285,210" fill="#b9b9b9"/><polygon points="285,180 285,210 281,207 281,183" fill="url(#agr)"/><rect x="276" y="183" width="5" height="24" fill="#97a52e"/><polygon points="285,180 298,180 294,183 285,183" fill="#848484"/><polygon points="285,183 289,183 289,207 285,210" fill="url(#agl)"/><polygon points="285,210 289,207 294,207 298,210" fill="#b9b9b9"/><polygon points="298,180 298,210 294,207 294,183" fill="url(#agr)"/><rect x="289" y="183" width="5" height="24" fill="#9ca02e"/><polygon points="298,180 311,180 307,183 298,183" fill="#848484"/><polygon points="298,183 302,183 302,207 298,210" fill="url(#agl)"/><polygon points="298,210 302,207 307,207 311,210" fill="#b9b9b9"/><polygon points="311,180 311,210 307,207 307,183" fill="url(#agr)"/><rect x="302" y="183" width="5" height="24" fill="#a19a2e"/><polygon points="311,180 324,180 320,183 311,183" fill="#848484"/><polygon points="311,183 315,183 315,207 311,210" fill="url(#agl)"/><polygon points="311,210 315,207 320,207 324,210" fill="#b9b9b9"/><polygon points="324,180 324,210 320,207 320,183" fill="url(#agr)"/><rect x="315" y="183" width="5" height="24" fill="#a6942e"/><polygon points="324,180 337,180 333,183 324,183" fill="#848484"/><polygon points="324,183 328,183 328,207 324,210" fill="url(#agl)"/><polygon points="324,210 328,207 333,207 337,210" fill="#b9b9b9"/><polygon points="337,180 337,210 333,207 333,183" fill="url(#agr)"/><rect x="328" y="183" width="5" height="24" fill="#aa8f2e"/><polygon points="337,180 350,180 346,183 337,183" fill="#848484"/><polygon points="337,183 341,183 341,207 337,210" fill="url(#agl)"/><polygon points="337,210 341,207 346,207 350,210" fill="#b9b9b9"/><polygon points="350,180 350,210 346,207 346,183" fill="url(#agr)"/><rect x="341" y="183" width="5" height="24" fill="#af892e"/><polygon points="350,180 363,180 359,183 350,183" fill="#848484"/><polygon points="350,183 354,183 354,207 350,210" fill="url(#agl)"/><polygon points="350,210 354,207 359,207 363,210" fill="#b9b9b9"/><polygon points="363,180 363,210 359,207 359,183" fill="url(#agr)"/><rect x="354" y="183" width="5" height="24" fill="#b4842e"/><polygon points="363,180 376,180 372,183 363,183" fill="#848484"/><polygon points="363,183 367,183 367,207 363,210" fill="url(#agl)"/><polygon points="363,210 367,207 372,207 376,210" fill="#b9b9b9"/><polygon points="376,180 376,210 372,207 372,183" fill="url(#agr)"/><rect x="367" y="183" width="5" height="24" fill="#b87e2e"/><polygon points="376,180 389,180 385,183 376,183" fill="#848484"/><polygon points="376,183 380,183 380,207 376,210" fill="url(#agl)"/><polygon points="376,210 380,207 385,207 389,210" fill="#b9b9b9"/><polygon points="389,180 389,210 385,207 385,183" fill="url(#agr)"/><rect x="380" y="183" width="5" height="24" fill="#bd782f"/><polygon points="389,180 402,180 398,183 389,183" fill="#848484"/><polygon points="389,183 393,183 393,207 389,210" fill="url(#agl)"/><polygon points="389,210 393,207 398,207 402,210" fill="#b9b9b9"/><polygon points="402,180 402,210 398,207 398,183" fill="url(#agr)"/><rect x="393" y="183" width="5" height="24" fill="#c2732f"/><polygon points="402,180 415,180 411,183 402,183" fill="#848484"/><polygon points="402,183 406,183 406,207 402,210" fill="url(#agl)"/><polygon points="402,210 406,207 411,207 415,210" fill="#b9b9b9"/><polygon points="415,180 415,210 411,207 411,183" fill="url(#agr)"/><rect x="406" y="183" width="5" height="24" fill="#c66d2f"/><polygon points="415,180 428,180 424,183 415,183" fill="#848484"/><polygon points="415,183 419,183 419,207 415,210" fill="url(#agl)"/><polygon points="415,210 419,207 424,207 428,210" fill="#b9b9b9"/><polygon points="428,180 428,210 424,207 424,183" fill="url(#agr)"/><rect x="419" y="183" width="5" height="24" fill="#cb682f"/><polygon points="428,180 441,180 437,183 428,183" fill="#848484"/><polygon points="428,183 432,183 432,207 428,210" fill="url(#agl)"/><polygon points="428,210 432,207 437,207 441,210" fill="#b9b9b9"/><polygon points="441,180 441,210 437,207 437,183" fill="url(#agr)"/><rect x="432" y="183" width="5" height="24" fill="#d0622f"/><polygon points="441,180 454,180 450,183 441,183" fill="#848484"/><polygon points="441,183 445,183 445,207 441,210" fill="url(#agl)"/><polygon points="441,210 445,207 450,207 454,210" fill="#b9b9b9"/><polygon points="454,180 454,210 450,207 450,183" fill="url(#agr)"/><rect x="445" y="183" width="5" height="24" fill="#d55c2f"/><polygon points="454,180 467,180 463,183 454,183" fill="#848484"/><polygon points="454,183 458,183 458,207 454,210" fill="url(#agl)"/><polygon points="454,210 458,207 463,207 467,210" fill="#b9b9b9"/><polygon points="467,180 467,210 463,207 463,183" fill="url(#agr)"/><rect x="458" y="183" width="5" height="24" fill="#d9572f"/><polygon points="467,180 480,180 476,183 467,183" fill="#848484"/><polygon points="467,183 471,183 471,207 467,210" fill="url(#agl)"/><polygon points="467,210 471,207 476,207 480,210" fill="#b9b9b9"/><polygon points="480,180 480,210 476,207 476,183" fill="url(#agr)"/><rect x="471" y="183" width="5" height="24" fill="#de512f"/><polygon points="480,180 493,180 489,183 480,183" fill="#848484"/><polygon points="480,183 484,183 484,207 480,210" fill="url(#agl)"/><polygon points="480,210 484,207 489,207 493,210" fill="#b9b9b9"/><polygon points="493,180 493,210 489,207 489,183" fill="url(#agr)"/><rect x="484" y="183" width="5" height="24" fill="#e34c2f"/><polygon points="493,180 506,180 502,183 493,183" fill="#848484"/><polygon points="493,183 497,183 497,207 493,210" fill="url(#agl)"/><polygon points="493,210 497,207 502,207 506,210" fill="#b9b9b9"/><polygon points="506,180 506,210 502,207 502,183" fill="url(#agr)"/><rect x="497" y="183" width="5" height="24" fill="#e7462f"/><polygon points="506,180 519,180 515,183 506,183" fill="#848484"/><polygon points="506,183 510,183 510,207 506,210" fill="url(#agl)"/><polygon points="506,210 510,207 515,207 519,210" fill="#b9b9b9"/><polygon points="519,180 519,210 515,207 515,183" fill="url(#agr)"/><rect x="510" y="183" width="5" height="24" fill="#ec4030"/><polygon points="519,180 532,180 528,183 519,183" fill="#848484"/><polygon points="519,183 523,183 523,207 519,210" fill="url(#agl)"/><polygon points="519,210 523,207 528,207 532,210" fill="#b9b9b9"/><polygon points="532,180 532,210 528,207 528,183" fill="url(#agr)"/><rect x="523" y="183" width="5" height="24" fill="#f13b30"/><polygon points="532,180 545,180 541,183 532,183" fill="#848484"/><polygon points="532,183 536,183 536,207 532,210" fill="url(#agl)"/><polygon points="532,210 536,207 541,207 545,210" fill="#b9b9b9"/><polygon points="545,180 545,210 541,207 541,183" fill="url(#agr)"/><rect x="536" y="183" width="5" height="24" fill="#f63530"/><polygon points="545,180 558,180 554,183 545,183" fill="#848484"/><polygon points="545,183 549,183 549,207 545,210" fill="url(#agl)"/><polygon points="545,210 549,207 554,207 558,210" fill="#b9b9b9"/><polygon points="558,180 558,210 554,207 554,183" fill="url(#agr)"/><rect x="549" y="183" width="5" height="24" fill="#fa3030"/><polygon points="558,180 571,180 567,183 558,183" fill="#848484"/><polygon points="558,183 562,183 562,207 558,210" fill="url(#agl)"/><polygon points="558,210 562,207 567,207 571,210" fill="#b9b9b9"/><polygon points="571,180 571,210 567,207 567,183" fill="url(#agr)"/><rect x="562" y="183" width="5" height="24" fill="#ff2a30"/><polygon points="241,116 293,116 289,119 243,119" fill="#959595"/><polygon points="241,116 243,119 243,134 241,136" fill="#9c9c9c"/><polygon points="241,136 243,134 289,134 293,136" fill="#c2c2c2"/><polygon points="293,116 293,136 289,134 289,119" fill="#bebebe"/><rect x="243" y="119" width="46" height="15" fill="#fdfdfd"/><defs><linearGradient id="sg228" x1="0" y1="0.35" x2="1" y2="0.65"><stop offset="0" stop-color="#e2e2e2"/><stop offset="0.5" stop-color="#c2c2c2"/><stop offset="0.8" stop-color="#858585"/><stop offset="1" stop-color="#6c6c6c"/></linearGradient></defs><path d="M234.0,114 C242.28,119.06 242.28,131.94 234.0,137 C225.72,131.94 225.72,119.06 234.0,114 z" fill="url(#sg228)"/><path d="M233.7,116 C239.68,119.75 239.68,131.25 233.7,134.5 C227.82,131.25 227.82,119.75 233.7,116 z" fill="#c8c8c8"/><rect x="229.5" y="124.5" width="8.5" height="1" fill="#9a9a9a"/><rect x="229.5" y="125.5" width="8.5" height="1" fill="#ececec"/><path d="M231.4,122.5 l2.4,-5.5 l2.4,5.5 z" fill="#c0c0c0" stroke="#6a6a6a" stroke-width="0.8"/><path d="M231.4,128.5 l2.4,5.5 l2.4,-5.5 z" fill="#c0c0c0" stroke="#6a6a6a" stroke-width="0.8"/><polygon points="34,176 60,176 56,179 36,179" fill="#959595"/><polygon points="34,176 36,179 36,194 34,196" fill="#9c9c9c"/><polygon points="34,196 36,194 56,194 60,196" fill="#c2c2c2"/><polygon points="60,176 60,196 56,194 56,179" fill="#bebebe"/><rect x="36" y="179" width="20" height="15" fill="#fdfdfd"/><defs><linearGradient id="sg19" x1="0" y1="0.35" x2="1" y2="0.65"><stop offset="0" stop-color="#e2e2e2"/><stop offset="0.5" stop-color="#c2c2c2"/><stop offset="0.8" stop-color="#858585"/><stop offset="1" stop-color="#6c6c6c"/></linearGradient></defs><path d="M25.75,172 C35.065,178.05 35.065,193.45 25.75,199.5 C16.435000000000002,193.45 16.435000000000002,178.05 25.75,172 z" fill="url(#sg19)"/><path d="M25.45,174 C32.465,178.875 32.465,192.625 25.45,197.0 C18.535,192.625 18.535,178.875 25.45,174 z" fill="#c8c8c8"/><rect x="20.5" y="184.75" width="10.0" height="1" fill="#9a9a9a"/><rect x="20.5" y="185.75" width="10.0" height="1" fill="#ececec"/><path d="M23.15,182.75 l2.4,-5.5 l2.4,5.5 z" fill="#c0c0c0" stroke="#6a6a6a" stroke-width="0.8"/><path d="M23.15,188.75 l2.4,5.5 l2.4,-5.5 z" fill="#c0c0c0" stroke="#6a6a6a" stroke-width="0.8"/></svg>
<div class="lbl" style="left:57.5px;top:110px;letter-spacing:-0.05px;">Start color</div>
<div class="lbl" style="left:240px;top:102px;"># steps</div>
<div class="lbl" style="left:540px;top:114px;letter-spacing:-0.2px;">end color</div>
<div class="lbl" style="left:61px;top:160px;">Array</div>
<div class="lbl" style="left:244.5px;top:120.5px;">40</div>
<div class="lbl" style="left:37.5px;top:180.5px;">0</div>
<svg width="647" height="542" viewBox="0 0 647 542" shape-rendering="crispEdges" font-family="Liberation Sans, sans-serif"><rect x="276" y="346" width="15" height="1" fill="#0000ff"/><rect x="307" y="346" width="10" height="1" fill="#0000ff"/><rect x="316" y="346" width="1" height="22" fill="#0000ff"/><rect x="316" y="367" width="27" height="1" fill="#0000ff"/><rect x="339" y="357" width="4" height="1" fill="#0000ff"/><rect x="177" y="381" width="8" height="1" fill="#0000ff"/><rect x="176" y="424" width="8" height="1" fill="#0000ff"/><rect x="217" y="378" width="37" height="1" fill="#0000ff"/><rect x="217" y="386" width="18" height="1" fill="#0000ff"/><rect x="234" y="386" width="1" height="27" fill="#0000ff"/><rect x="234" y="412" width="20" height="1" fill="#0000ff"/><rect x="217" y="394" width="10" height="1" fill="#0000ff"/><rect x="226" y="394" width="1" height="53" fill="#0000ff"/><rect x="226" y="446" width="28" height="1" fill="#0000ff"/><rect x="216" y="421" width="9" height="1" fill="#0000ff"/><rect x="228" y="421" width="16" height="1" fill="#0000ff"/><rect x="243" y="386" width="1" height="25" fill="#0000ff"/><rect x="243" y="414" width="1" height="8" fill="#0000ff"/><rect x="243" y="386" width="11" height="1" fill="#0000ff"/><rect x="216" y="429" width="9" height="1" fill="#0000ff"/><rect x="228" y="429" width="23" height="1" fill="#0000ff"/><rect x="250" y="420" width="1" height="10" fill="#0000ff"/><rect x="250" y="420" width="4" height="1" fill="#0000ff"/><rect x="216" y="437" width="5" height="1" fill="#0000ff"/><rect x="220" y="437" width="1" height="18" fill="#0000ff"/><rect x="220" y="454" width="34" height="1" fill="#0000ff"/><rect x="285" y="381" width="7" height="2" fill="#0000ff"/><rect x="300" y="381" width="71" height="2" fill="#0000ff"/><rect x="375" y="381" width="7" height="2" fill="#0000ff"/><rect x="285" y="415" width="7" height="2" fill="#0000ff"/><rect x="300" y="415" width="71" height="2" fill="#0000ff"/><rect x="375" y="415" width="7" height="2" fill="#0000ff"/><rect x="285" y="449" width="7" height="2" fill="#0000ff"/><rect x="300" y="449" width="71" height="2" fill="#0000ff"/><rect x="375" y="449" width="7" height="2" fill="#0000ff"/><rect x="291" y="338" width="187" height="1" fill="#000"/><rect x="291" y="338" width="1" height="151" fill="#000"/><rect x="477" y="338" width="1" height="143" fill="#000"/><rect x="291" y="488" width="179" height="1" fill="#000"/><rect x="479" y="340" width="1" height="151" fill="#000"/><rect x="481" y="342" width="1" height="151" fill="#000"/><rect x="293" y="490" width="187" height="1" fill="#000"/><rect x="295" y="492" width="187" height="1" fill="#000"/><rect x="477" y="340" width="3" height="1" fill="#000"/><rect x="479" y="342" width="3" height="1" fill="#000"/><rect x="293" y="488" width="1" height="3" fill="#000"/><rect x="295" y="490" width="1" height="3" fill="#000"/><rect x="469" y="480" width="9" height="1" fill="#000"/><rect x="469" y="480" width="1" height="9" fill="#000"/><path d="M477.5,480.5 L469.5,488.5" fill="none" stroke="#000" stroke-width="1" shape-rendering="geometricPrecision"/><rect x="291.5" y="378.5" width="8" height="8" fill="#0000ff" stroke="#000" stroke-width="1"/><rect x="291.5" y="412.5" width="8" height="8" fill="#0000ff" stroke="#000" stroke-width="1"/><rect x="291.5" y="446.5" width="8" height="8" fill="#0000ff" stroke="#000" stroke-width="1"/><rect x="363" y="362" width="10" height="1" fill="#ff8000"/><rect x="372" y="362" width="1" height="105" fill="#ff8000"/><rect x="372" y="398" width="10" height="1" fill="#ff8000"/><rect x="372" y="432" width="10" height="1" fill="#ff8000"/><rect x="372" y="466" width="10" height="1" fill="#ff8000"/><circle cx="372.5" cy="398.5" r="2.5" fill="#ff8000" shape-rendering="geometricPrecision"/><circle cx="372.5" cy="432.5" r="2.5" fill="#ff8000" shape-rendering="geometricPrecision"/><rect x="414" y="390" width="15" height="1" fill="#ff8000"/><rect x="414" y="424" width="6" height="1" fill="#ff8000"/><rect x="419" y="401" width="1" height="24" fill="#ff8000"/><rect x="419" y="401" width="10" height="1" fill="#ff8000"/><rect x="414" y="458" width="11" height="1" fill="#ff8000"/><rect x="424" y="410" width="1" height="49" fill="#ff8000"/><rect x="424" y="410" width="5" height="1" fill="#ff8000"/><rect x="460" y="401" width="13" height="1" fill="#0000ff"/><rect x="482" y="400" width="5" height="2" fill="#0000ff"/><rect x="245.0" y="339.0" width="30" height="14" fill="#fff" stroke="#0000ff" stroke-width="2"/><rect x="247.5" y="341.5" width="25" height="9" fill="#fff" stroke="#0000ff" stroke-width="1"/><rect x="266" y="342" width="6" height="8" fill="#b4b4ff"/><rect x="266" y="338" width="10" height="16" fill="rgba(255,255,255,0.3)"/><path d="M271,343 l3.5,3 l-3.5,3 z" fill="#000" /><text x="252" y="349" font-size="8.3" fill="#0000ff" font-weight="bold" shape-rendering="geometricPrecision" textLength="15.5" lengthAdjust="spacingAndGlyphs" stroke="#0000ff" stroke-width="0.3">U32</text><rect x="146.0" y="374.0" width="30" height="14" fill="#fff" stroke="#0000ff" stroke-width="2"/><rect x="148.5" y="376.5" width="25" height="9" fill="#fff" stroke="#0000ff" stroke-width="1"/><rect x="167" y="377" width="6" height="8" fill="#b4b4ff"/><rect x="167" y="373" width="10" height="16" fill="rgba(255,255,255,0.3)"/><path d="M172,378 l3.5,3 l-3.5,3 z" fill="#000" /><text x="153" y="384" font-size="8.3" fill="#0000ff" font-weight="bold" shape-rendering="geometricPrecision" textLength="15.5" lengthAdjust="spacingAndGlyphs" stroke="#0000ff" stroke-width="0.3">U32</text><rect x="145.0" y="417.0" width="30" height="14" fill="#fff" stroke="#0000ff" stroke-width="2"/><rect x="147.5" y="419.5" width="25" height="9" fill="#fff" stroke="#0000ff" stroke-width="1"/><rect x="166" y="420" width="6" height="8" fill="#b4b4ff"/><rect x="166" y="416" width="10" height="16" fill="rgba(255,255,255,0.3)"/><path d="M171,421 l3.5,3 l-3.5,3 z" fill="#000" /><text x="152" y="427" font-size="8.3" fill="#0000ff" font-weight="bold" shape-rendering="geometricPrecision" textLength="15.5" lengthAdjust="spacingAndGlyphs" stroke="#0000ff" stroke-width="0.3">U32</text><rect x="185.5" y="366.5" width="31" height="31" fill="#cccccc" stroke="#000" stroke-width="1"/><circle cx="192.5" cy="382" r="5.5" fill="#ffff00" stroke="#000" stroke-width="1.2" shape-rendering="geometricPrecision"/><path d="M192.5,382 v-4.6" fill="none" stroke="#ff0000" stroke-width="2" shape-rendering="geometricPrecision"/><path d="M192.5,382 l-3.6,3" fill="none" stroke="#00d000" stroke-width="2" shape-rendering="geometricPrecision"/><path d="M192.5,382 l3.6,3" fill="none" stroke="#0000c0" stroke-width="2" shape-rendering="geometricPrecision"/><rect x="198" y="382" width="5" height="1" fill="#000"/><rect x="203" y="373" width="1" height="19" fill="#000"/><rect x="203" y="373" width="3" height="1" fill="#000"/><rect x="203" y="382" width="3" height="1" fill="#000"/><rect x="203" y="391" width="3" height="1" fill="#000"/><rect x="206.5" y="370.5" width="6" height="6" fill="#ff0000" stroke="#000" stroke-width="1"/><rect x="206.5" y="379.5" width="6" height="6" fill="#00ff00" stroke="#000" stroke-width="1"/><rect x="206.5" y="388.5" width="6" height="6" fill="#000090" stroke="#000" stroke-width="1"/><rect x="184.5" y="409.5" width="31" height="31" fill="#cccccc" stroke="#000" stroke-width="1"/><circle cx="191.5" cy="425" r="5.5" fill="#ffff00" stroke="#000" stroke-width="1.2" shape-rendering="geometricPrecision"/><path d="M191.5,425 v-4.6" fill="none" stroke="#ff0000" stroke-width="2" shape-rendering="geometricPrecision"/><path d="M191.5,425 l-3.6,3" fill="none" stroke="#00d000" stroke-width="2" shape-rendering="geometricPrecision"/><path d="M191.5,425 l3.6,3" fill="none" stroke="#0000c0" stroke-width="2" shape-rendering="geometricPrecision"/><rect x="197" y="425" width="5" height="1" fill="#000"/><rect x="202" y="416" width="1" height="19" fill="#000"/><rect x="202" y="416" width="3" height="1" fill="#000"/><rect x="202" y="425" width="3" height="1" fill="#000"/><rect x="202" y="434" width="3" height="1" fill="#000"/><rect x="205.5" y="413.5" width="6" height="6" fill="#ff0000" stroke="#000" stroke-width="1"/><rect x="205.5" y="422.5" width="6" height="6" fill="#00ff00" stroke="#000" stroke-width="1"/><rect x="205.5" y="431.5" width="6" height="6" fill="#000090" stroke="#000" stroke-width="1"/><rect x="254.5" y="374.5" width="31" height="16" fill="#ffffcc" stroke="#000" stroke-width="1"/><rect x="257.5" y="376.5" width="4" height="4" fill="#ffffcc" stroke="#000" stroke-width="1"/><rect x="263" y="378" width="1" height="1" fill="#000"/><rect x="265" y="378" width="1" height="1" fill="#000"/><rect x="267" y="378" width="3" height="1" fill="#000"/><rect x="268" y="377" width="1" height="3" fill="#000"/><rect x="257.5" y="384.5" width="4" height="4" fill="#ffffcc" stroke="#000" stroke-width="1"/><rect x="263" y="386" width="1" height="1" fill="#000"/><rect x="265" y="386" width="1" height="1" fill="#000"/><rect x="267" y="386" width="3" height="1" fill="#000"/><rect x="268" y="385" width="1" height="3" fill="#000"/><rect x="272" y="378" width="1" height="9" fill="#000"/><rect x="273" y="376" width="1" height="2" fill="#000"/><rect x="273" y="387" width="1" height="2" fill="#000"/><rect x="274.5" y="376.5" width="8" height="12" fill="#ffffcc" stroke="#000" stroke-width="1"/><rect x="278" y="376" width="1" height="13" fill="#000"/><rect x="274" y="380" width="9" height="1" fill="#000"/><rect x="274" y="384" width="9" height="1" fill="#000"/><rect x="253.5" y="408.5" width="31" height="16" fill="#ffffcc" stroke="#000" stroke-width="1"/><rect x="256.5" y="410.5" width="4" height="4" fill="#ffffcc" stroke="#000" stroke-width="1"/><rect x="262" y="412" width="1" height="1" fill="#000"/><rect x="264" y="412" width="1" height="1" fill="#000"/><rect x="266" y="412" width="3" height="1" fill="#000"/><rect x="267" y="411" width="1" height="3" fill="#000"/><rect x="256.5" y="418.5" width="4" height="4" fill="#ffffcc" stroke="#000" stroke-width="1"/><rect x="262" y="420" width="1" height="1" fill="#000"/><rect x="264" y="420" width="1" height="1" fill="#000"/><rect x="266" y="420" width="3" height="1" fill="#000"/><rect x="267" y="419" width="1" height="3" fill="#000"/><rect x="271" y="412" width="1" height="9" fill="#000"/><rect x="272" y="410" width="1" height="2" fill="#000"/><rect x="272" y="421" width="1" height="2" fill="#000"/><rect x="273.5" y="410.5" width="8" height="12" fill="#ffffcc" stroke="#000" stroke-width="1"/><rect x="277" y="410" width="1" height="13" fill="#000"/><rect x="273" y="414" width="9" height="1" fill="#000"/><rect x="273" y="418" width="9" height="1" fill="#000"/><rect x="253.5" y="442.5" width="31" height="16" fill="#ffffcc" stroke="#000" stroke-width="1"/><rect x="256.5" y="444.5" width="4" height="4" fill="#ffffcc" stroke="#000" stroke-width="1"/><rect x="262" y="446" width="1" height="1" fill="#000"/><rect x="264" y="446" width="1" height="1" fill="#000"/><rect x="266" y="446" width="3" height="1" fill="#000"/><rect x="267" y="445" width="1" height="3" fill="#000"/><rect x="256.5" y="452.5" width="4" height="4" fill="#ffffcc" stroke="#000" stroke-width="1"/><rect x="262" y="454" width="1" height="1" fill="#000"/><rect x="264" y="454" width="1" height="1" fill="#000"/><rect x="266" y="454" width="3" height="1" fill="#000"/><rect x="267" y="453" width="1" height="3" fill="#000"/><rect x="271" y="446" width="1" height="9" fill="#000"/><rect x="272" y="444" width="1" height="2" fill="#000"/><rect x="272" y="455" width="1" height="2" fill="#000"/><rect x="273.5" y="444.5" width="8" height="12" fill="#ffffcc" stroke="#000" stroke-width="1"/><rect x="277" y="444" width="1" height="13" fill="#000"/><rect x="273" y="448" width="9" height="1" fill="#000"/><rect x="273" y="452" width="9" height="1" fill="#000"/><rect x="292.0" y="339.0" width="14" height="14" fill="#ffffcc" stroke="#0000ff" stroke-width="2"/><text x="298.7" y="350" font-size="12" fill="#0000ff" font-weight="bold" shape-rendering="geometricPrecision" text-anchor="middle">N</text><path d="M291,343.5 l3,2.5 l-3,2.5 z" fill="#ff0000" /><rect x="324.0" y="350.0" width="14" height="14" fill="#fff" stroke="#0000ff" stroke-width="2"/><rect x="326" y="352" width="10" height="10" fill="#ffffcc"/><text x="331" y="361" font-size="11" fill="#0000ff" font-weight="bold" shape-rendering="geometricPrecision" text-anchor="middle">i</text><path d="M342.5,352.5 L363,362.5 L342.5,372.5 z" fill="#ffffcc" stroke="#000" stroke-width="1" shape-rendering="geometricPrecision"/><rect x="346" y="362" width="6" height="1" fill="#000"/><rect x="348" y="359" width="2" height="2" fill="#000"/><rect x="348" y="364" width="2" height="2" fill="#000"/><path d="M342,354.5 l3,3 l-3,3 z M342,364.5 l3,3 l-3,3 z" fill="#ff0000" /><rect x="382.5" y="374.5" width="31" height="31" fill="#ffffcc" stroke="#000" stroke-width="1"/><rect x="384.5" y="385.5" width="6" height="5" fill="#ffffcc" stroke="#000" stroke-width="1"/><rect x="390.5" y="385.5" width="6" height="5" fill="#ffffcc" stroke="#000" stroke-width="1"/><rect x="396.5" y="385.5" width="6" height="5" fill="#ffffcc" stroke="#000" stroke-width="1"/><rect x="406.5" y="385.5" width="5" height="5" fill="#ffffcc" stroke="#000" stroke-width="1"/><rect x="386" y="382" width="2" height="3" fill="#000"/><rect x="392" y="380" width="2" height="5" fill="#000"/><rect x="399" y="376" width="3" height="9" fill="#000"/><rect x="408" y="378" width="2" height="7" fill="#000"/><path d="M393,380 q2,-4 6,-4" fill="none" stroke="#000" stroke-width="1" shape-rendering="geometricPrecision"/><rect x="403" y="378" width="1" height="1" fill="#000"/><rect x="405" y="378" width="1" height="1" fill="#000"/><rect x="407" y="378" width="1" height="1" fill="#000"/><rect x="397" y="379" width="1" height="1" fill="#000"/><rect x="397" y="381" width="1" height="1" fill="#000"/><rect x="397" y="383" width="1" height="1" fill="#000"/><rect x="397" y="391" width="1" height="3" fill="#000"/><rect x="396" y="392" width="3" height="1" fill="#000"/><rect x="397" y="395" width="1" height="1" fill="#000"/><rect x="397" y="397" width="1" height="1" fill="#000"/><rect x="397" y="399" width="1" height="1" fill="#000"/><rect x="388" y="400" width="1" height="1" fill="#000"/><rect x="390" y="400" width="1" height="1" fill="#000"/><rect x="392" y="400" width="1" height="1" fill="#000"/><rect x="394" y="400" width="1" height="1" fill="#000"/><rect x="396" y="400" width="1" height="1" fill="#000"/><text x="385" y="401.5" font-size="7" fill="#000" font-weight="bold" shape-rendering="geometricPrecision">X</text><text x="408.5" y="401.5" font-size="7" fill="#000" font-weight="bold" shape-rendering="geometricPrecision">Y</text><path d="M382,395 l4,3.5 l-4,3.5 z" fill="#ff0000" /><rect x="382.5" y="408.5" width="31" height="31" fill="#ffffcc" stroke="#000" stroke-width="1"/><rect x="384.5" y="419.5" width="6" height="5" fill="#ffffcc" stroke="#000" stroke-width="1"/><rect x="390.5" y="419.5" width="6" height="5" fill="#ffffcc" stroke="#000" stroke-width="1"/><rect x="396.5" y="419.5" width="6" height="5" fill="#ffffcc" stroke="#000" stroke-width="1"/><rect x="406.5" y="419.5" width="5" height="5" fill="#ffffcc" stroke="#000" stroke-width="1"/><rect x="386" y="416" width="2" height="3" fill="#000"/><rect x="392" y="414" width="2" height="5" fill="#000"/><rect x="399" y="410" width="3" height="9" fill="#000"/><rect x="408" y="412" width="2" height="7" fill="#000"/><path d="M393,414 q2,-4 6,-4" fill="none" stroke="#000" stroke-width="1" shape-rendering="geometricPrecision"/><rect x="403" y="412" width="1" height="1" fill="#000"/><rect x="405" y="412" width="1" height="1" fill="#000"/><rect x="407" y="412" width="1" height="1" fill="#000"/><rect x="397" y="413" width="1" height="1" fill="#000"/><rect x="397" y="415" width="1" height="1" fill="#000"/><rect x="397" y="417" width="1" height="1" fill="#000"/><rect x="397" y="425" width="1" height="3" fill="#000"/><rect x="396" y="426" width="3" height="1" fill="#000"/><rect x="397" y="429" width="1" height="1" fill="#000"/><rect x="397" y="431" width="1" height="1" fill="#000"/><rect x="397" y="433" width="1" height="1" fill="#000"/><rect x="388" y="434" width="1" height="1" fill="#000"/><rect x="390" y="434" width="1" height="1" fill="#000"/><rect x="392" y="434" width="1" height="1" fill="#000"/><rect x="394" y="434" width="1" height="1" fill="#000"/><rect x="396" y="434" width="1" height="1" fill="#000"/><text x="385" y="435.5" font-size="7" fill="#000" font-weight="bold" shape-rendering="geometricPrecision">X</text><text x="408.5" y="435.5" font-size="7" fill="#000" font-weight="bold" shape-rendering="geometricPrecision">Y</text><path d="M382,429 l4,3.5 l-4,3.5 z" fill="#ff0000" /><rect x="382.5" y="442.5" width="31" height="31" fill="#ffffcc" stroke="#000" stroke-width="1"/><rect x="384.5" y="453.5" width="6" height="5" fill="#ffffcc" stroke="#000" stroke-width="1"/><rect x="390.5" y="453.5" width="6" height="5" fill="#ffffcc" stroke="#000" stroke-width="1"/><rect x="396.5" y="453.5" width="6" height="5" fill="#ffffcc" stroke="#000" stroke-width="1"/><rect x="406.5" y="453.5" width="5" height="5" fill="#ffffcc" stroke="#000" stroke-width="1"/><rect x="386" y="450" width="2" height="3" fill="#000"/><rect x="392" y="448" width="2" height="5" fill="#000"/><rect x="399" y="444" width="3" height="9" fill="#000"/><rect x="408" y="446" width="2" height="7" fill="#000"/><path d="M393,448 q2,-4 6,-4" fill="none" stroke="#000" stroke-width="1" shape-rendering="geometricPrecision"/><rect x="403" y="446" width="1" height="1" fill="#000"/><rect x="405" y="446" width="1" height="1" fill="#000"/><rect x="407" y="446" width="1" height="1" fill="#000"/><rect x="397" y="447" width="1" height="1" fill="#000"/><rect x="397" y="449" width="1" height="1" fill="#000"/><rect x="397" y="451" width="1" height="1" fill="#000"/><rect x="397" y="459" width="1" height="3" fill="#000"/><rect x="396" y="460" width="3" height="1" fill="#000"/><rect x="397" y="463" width="1" height="1" fill="#000"/><rect x="397" y="465" width="1" height="1" fill="#000"/><rect x="397" y="467" width="1" height="1" fill="#000"/><rect x="388" y="468" width="1" height="1" fill="#000"/><rect x="390" y="468" width="1" height="1" fill="#000"/><rect x="392" y="468" width="1" height="1" fill="#000"/><rect x="394" y="468" width="1" height="1" fill="#000"/><rect x="396" y="468" width="1" height="1" fill="#000"/><text x="385" y="469.5" font-size="7" fill="#000" font-weight="bold" shape-rendering="geometricPrecision">X</text><text x="408.5" y="469.5" font-size="7" fill="#000" font-weight="bold" shape-rendering="geometricPrecision">Y</text><path d="M382,463 l4,3.5 l-4,3.5 z" fill="#ff0000" /><rect x="428.5" y="385.5" width="31" height="31" fill="#cccccc" stroke="#000" stroke-width="1"/><rect x="431.5" y="389.5" width="6" height="6" fill="#ff0000" stroke="#000" stroke-width="1"/><rect x="431.5" y="398.5" width="6" height="6" fill="#00ff00" stroke="#000" stroke-width="1"/><rect x="431.5" y="407.5" width="6" height="6" fill="#000090" stroke="#000" stroke-width="1"/><rect x="438" y="392" width="3" height="1" fill="#000"/><rect x="438" y="401" width="3" height="1" fill="#000"/><rect x="438" y="410" width="3" height="1" fill="#000"/><rect x="441" y="392" width="1" height="19" fill="#000"/><rect x="441" y="401" width="6" height="1" fill="#000"/><circle cx="453" cy="401" r="5.5" fill="#ffff00" stroke="#000" stroke-width="1.2" shape-rendering="geometricPrecision"/><path d="M453,401 v-4.6" fill="none" stroke="#ff0000" stroke-width="2" shape-rendering="geometricPrecision"/><path d="M453,401 l-3.6,3" fill="none" stroke="#00d000" stroke-width="2" shape-rendering="geometricPrecision"/><path d="M453,401 l3.6,3" fill="none" stroke="#0000c0" stroke-width="2" shape-rendering="geometricPrecision"/><path d="M428,389.5 l4,3 l-4,3 z" fill="#ff0000" /><path d="M428,398.5 l4,3 l-4,3 z" fill="#ff0000" /><path d="M428,407.5 l4,3 l-4,3 z" fill="#ff0000" /><rect x="473.5" y="397.5" width="8" height="8" fill="#ffffcc" stroke="#000" stroke-width="1"/><rect x="475" y="399" width="1" height="5" fill="#0000ff"/><rect x="476" y="399" width="1" height="1" fill="#0000ff"/><rect x="476" y="403" width="1" height="1" fill="#0000ff"/><rect x="479" y="399" width="1" height="5" fill="#0000ff"/><rect x="478" y="399" width="1" height="1" fill="#0000ff"/><rect x="478" y="403" width="1" height="1" fill="#0000ff"/><rect x="487.5" y="394.5" width="31" height="15" fill="#fff" stroke="#0000ff" stroke-width="1"/><text x="492.5" y="405.2" font-size="10" fill="#0000ff" font-weight="bold" shape-rendering="geometricPrecision">[</text><text x="496.3" y="405.2" font-size="9.3" fill="#0000ff" font-weight="bold" shape-rendering="geometricPrecision" textLength="14.5" lengthAdjust="spacingAndGlyphs" stroke="#0000ff" stroke-width="0.3">U32</text><text x="511" y="405.2" font-size="10" fill="#0000ff" font-weight="bold" shape-rendering="geometricPrecision">]</text><rect x="488" y="396" width="9" height="12" fill="rgba(150,150,255,0.6)"/><path d="M491,398.5 l3,3 l-3,3 z" fill="#000" /></svg>
<div class="lbl" style="left:205px;top:340px;"># steps</div>
<div class="lbl" style="left:93px;top:375px;letter-spacing:-0.15px;">Start color</div>
<div class="lbl" style="left:98px;top:419px;letter-spacing:-0.2px;">end color</div>
<div class="lbl" style="left:487.5px;top:380.5px;">Array</div>
</body></html>
